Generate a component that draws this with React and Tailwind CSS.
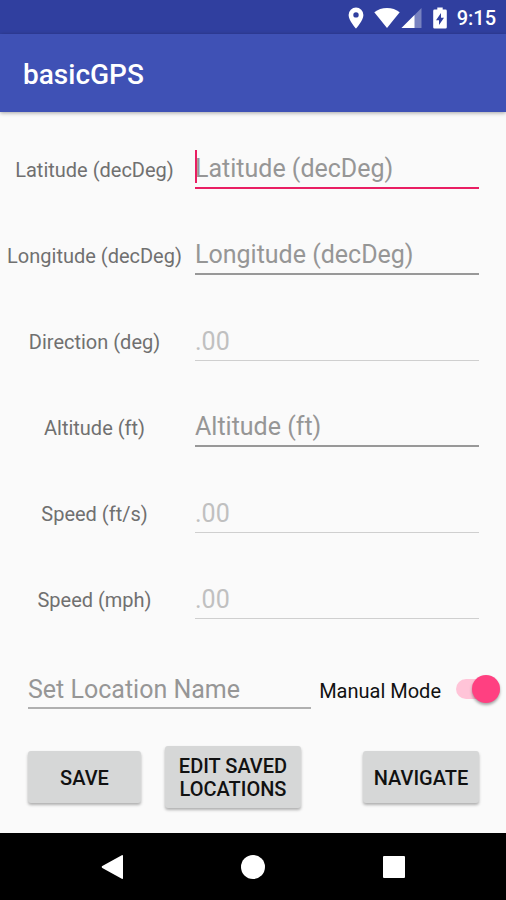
import React, { useState } from 'react';

const fields = [
  { id: 'latitude', label: 'Latitude (decDeg)', placeholder: 'Latitude (decDeg)', active: true },
  { id: 'longitude', label: 'Longitude (decDeg)', placeholder: 'Longitude (decDeg)' },
  { id: 'direction', label: 'Direction (deg)', placeholder: '.00', disabled: true },
  { id: 'altitude', label: 'Altitude (ft)', placeholder: 'Altitude (ft)' },
  { id: 'speedFts', label: 'Speed (ft/s)', placeholder: '.00', disabled: true },
  { id: 'speedMph', label: 'Speed (mph)', placeholder: '.00', disabled: true },
];

const fieldStyle = (field) => {
  if (field.active) return 'border-b-2 border-[#e91e63] placeholder:text-[#969696]';
  if (field.disabled) return 'border-b border-[#cfcfcf] placeholder:text-[#c0c0c0]';
  return 'border-b-2 border-[#989898] placeholder:text-[#969696]';
};

const buttonStyle =
  'rounded-[3px] bg-[#d6d7d7] pt-0.5 text-xl leading-[23px] font-medium text-[#111] shadow-[0_2px_3px_rgba(0,0,0,0.3)]';

const StatusBar = () => (
  <div className="flex h-[34px] items-center justify-end bg-[#303f9f] pt-px pr-[10px] text-white">
    <svg width="16" height="22" viewBox="0 0 16 22" fill="currentColor" aria-hidden="true">
      <path
        fillRule="evenodd"
        d="M8 0.5a7.4 7.4 0 0 0-7.4 7.4C0.600 13.400 8 21.500 8 21.500s7.400-8.100 7.400-13.600A7.400 7.400 0 0 0 8 0.500zM8 5.200a2.700 2.700 0 1 1 0 5.400a2.700 2.700 0 0 1 0-5.400z"
      />
    </svg>
    <svg className="ml-[10px]" width="26" height="20" viewBox="0 0 26 20" fill="currentColor" aria-hidden="true">
      <path d="M13 20L0.300 4.200C3.800 1.500 8.200 0 13 0s9.200 1.500 12.700 4.200z" />
    </svg>
    <svg className="ml-px" width="21" height="20" viewBox="0 0 21 20" fill="currentColor" aria-hidden="true">
      <path d="M20.500 0v20H0.500z" opacity="0.35" />
      <path d="M13.500 7v13H0.500z" />
    </svg>
    <svg className="ml-[10px]" width="16" height="22" viewBox="0 0 16 22" fill="currentColor" aria-hidden="true">
      <path
        fillRule="evenodd"
        d="M5.300 0.500h5.400v2.100h2.800a1.300 1.300 0 0 1 1.300 1.300v16.300a1.300 1.300 0 0 1-1.300 1.300H2.500a1.300 1.300 0 0 1-1.300-1.300V3.900a1.300 1.300 0 0 1 1.300-1.300h2.800zM9 6l-5 7.200h3V18l5-7.300H9z"
      />
    </svg>
    <span className="ml-[9px] text-xl leading-6 font-medium">9:15</span>
  </div>
);

const FieldRow = ({ field }) => (
  <div className="flex h-[86px] items-center pr-[27px]">
    <label
      htmlFor={field.id}
      className="w-[195px] shrink-0 pt-0.5 pr-[6px] text-center text-xl leading-6 whitespace-nowrap text-[#707070]"
    >
      {field.label}
    </label>
    <div className="relative min-w-0 flex-1">
      <input
        id={field.id}
        type="text"
        placeholder={field.placeholder}
        disabled={field.disabled}
        className={`block h-10 w-full bg-transparent pt-px text-[25px] text-[#212121] outline-none ${fieldStyle(field)}`}
      />
      {field.active && <span className="absolute top-px left-0 h-[33px] w-[2px] bg-[#e91e63]" />}
    </div>
  </div>
);

const NavBar = () => (
  <nav className="flex h-[67px] items-center justify-center gap-[93px] bg-black text-white">
    <button type="button" aria-label="Back" className="flex h-12 w-12 items-center justify-center">
      <svg width="24" height="24" viewBox="0 0 24 24" fill="currentColor">
        <path d="M23 0.800v22.400a0.800 0.800 0 0 1-1.200 0.500L2.300 12.900a1 1 0 0 1 0-1.800L21.800 0.300a0.800 0.800 0 0 1 1.200 0.500z" />
      </svg>
    </button>
    <button type="button" aria-label="Home" className="flex h-12 w-12 items-center justify-center">
      <span className="h-6 w-6 rounded-full bg-white" />
    </button>
    <button type="button" aria-label="Recent apps" className="flex h-12 w-12 items-center justify-center">
      <span className="h-[22px] w-[22px] rounded-[1px] bg-white" />
    </button>
  </nav>
);

const App = () => {
  const [manual, setManual] = useState(true);

  return (
    <div className="flex min-h-screen flex-col bg-[#fafafa] font-[Roboto,sans-serif]">
      <StatusBar />
      <header className="flex h-[78px] items-center bg-[#3f51b5] px-[23px] shadow-[0_1px_4px_rgba(0,0,0,0.35)]">
        <h1 className="pt-1 text-[28px] leading-8 font-medium text-white">basicGPS</h1>
      </header>

      <main className="flex-1 pt-[14px]">
        {fields.map((field) => (
          <FieldRow key={field.id} field={field} />
        ))}

        <div className="flex h-[94px] items-center gap-2 pr-[6px] pl-7">
          <input
            type="text"
            aria-label="Set Location Name"
            placeholder="Set Location Name"
            className="block h-10 min-w-0 flex-1 border-b-2 border-[#b0b0b0] bg-transparent pt-0.5 text-[25px] text-[#212121] outline-none placeholder:text-[#969696]"
          />
          <label htmlFor="manual" className="pt-1 pr-[7px] text-xl leading-6 whitespace-nowrap text-[#111]">
            Manual Mode
          </label>
          {/* Switch: pill track with a raised thumb */}
          <input
            id="manual"
            type="checkbox"
            role="switch"
            checked={manual}
            onChange={() => setManual(!manual)}
            className="relative h-5 w-11 shrink-0 appearance-none rounded-full bg-[#c4c4c4] before:absolute before:-top-1 before:left-0 before:h-7 before:w-7 before:rounded-full before:bg-[#f1f1f1] before:shadow-[0_2px_3px_rgba(0,0,0,0.35)] checked:bg-[#ffc4d8] checked:before:left-4 checked:before:bg-[#ff4081]"
          />
        </div>

        <div className="flex h-[82px] items-center pr-[27px] pl-7">
          <button type="button" className={`h-[52px] w-[113px] ${buttonStyle}`}>SAVE</button>
          <button type="button" className={`ml-6 h-[62px] w-[136px] px-3 ${buttonStyle}`}>
            EDIT SAVED LOCATIONS
          </button>
          <button type="button" className={`ml-auto h-[52px] w-[116px] ${buttonStyle}`}>NAVIGATE</button>
        </div>
      </main>

      <NavBar />
    </div>
  );
};

export default App;
